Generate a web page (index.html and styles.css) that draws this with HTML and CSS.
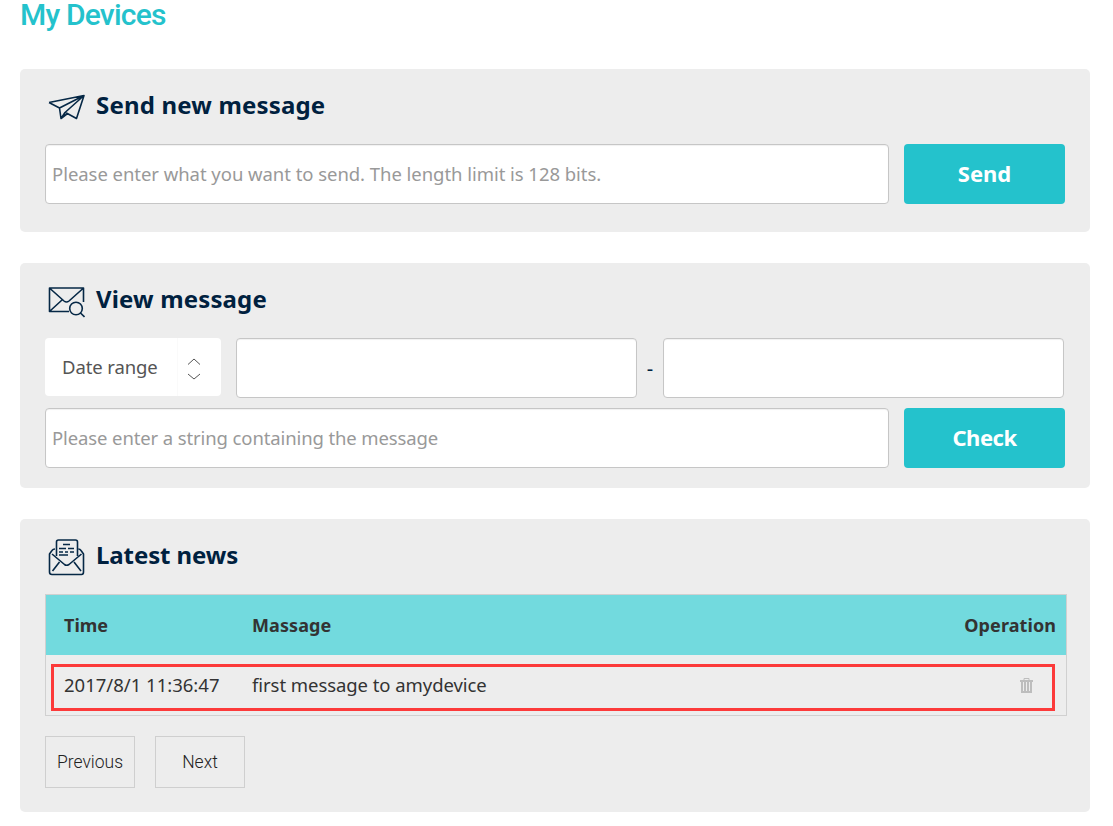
FILE: index.html
```html
<!DOCTYPE html>
<html lang="en">
<head>
<meta charset="utf-8">
<title>My Devices</title>
<link rel="stylesheet" href="styles.css">
</head>
<body>
<main class="page">
  <h1 class="page-title">My Devices</h1>

  <section class="panel panel-send">
    <h2 class="panel-title">
      <svg class="icon" width="38" height="38" viewBox="0 0 38 38"><path d="M2 14.500 37 7.500 29.500 30.500 18.500 24.500M2 14.500 12.500 20l24.500-12.500L18 24.500l-4 6L12.500 20M14 30.500l6.500-5"/></svg>
      <span class="t-send">Send new message</span>
    </h2>
    <div class="row">
      <input class="field field-long ph-send" type="text" placeholder="Please enter what you want to send. The length limit is 128 bits.">
      <button class="btn">Send</button>
    </div>
  </section>

  <section class="panel panel-view">
    <h2 class="panel-title">
      <svg class="icon" width="38" height="38" viewBox="0 0 38 38"><path d="M22 29.500H2.500V6h34V20M3 6.500l14 12.500q2.500 2 5 0L36 6.500M3 29l12-11"/><circle cx="29" cy="26.500" r="6.300"/><path d="M33.500 31 37.500 35"/></svg>
      <span class="t-view">View message</span>
    </h2>
    <div class="row filters">
      <div class="select"><span class="select-label">Date range</span><span class="select-arrow"><svg width="14" height="24" viewBox="0 0 14 24"><path d="M1 8.500 7 3l6 5.500M1 18l6 5 6-5"/></svg></span></div>
      <input class="field field-date" type="text">
      <span class="dash">-</span>
      <input class="field field-date" type="text">
    </div>
    <div class="row">
      <input class="field field-long ph-view" type="text" placeholder="Please enter a string containing the message">
      <button class="btn btn-check">Check</button>
    </div>
  </section>

  <section class="panel panel-news">
    <h2 class="panel-title">
      <svg class="icon" width="38" height="38" viewBox="0 0 38 38"><path d="M9.500 18V4q0-2 2-2h17q2 0 2 2v14M8 11q-2 0-3 1.500L2.500 16v18q0 2.500 2.500 2.500h29.500q2 0 2-2.500V16l-2.500-3.500Q33 11 31.500 11M5 16l12.500 10.500q2 1.500 4.500 0L34.500 16M5.500 33l7-9M34 33l-7-9"/><path d="M16 6.500h7M12 10.500h7m2 0h6M12 14h4m2 0h3m2 0h4M12 17h9"/></svg>
      <span class="t-news">Latest news</span>
    </h2>
    <div class="table">
      <div class="table-row table-head"><span class="col-time">Time</span><span class="col-msg">Massage</span><span class="col-op">Operation</span></div>
      <div class="table-row table-item"><span class="col-time">2017/8/1 11:36:47</span><span class="col-msg">first message to amydevice</span><span class="col-op"><svg class="trash" width="13" height="16" viewBox="0 0 13 16"><path d="M4 2V.5h5V2" fill="none" stroke="#bdbdbd"/><path fill="#bdbdbd" fill-rule="evenodd" d="M0 2h13v2h-1v11H1V4H0zM3 4v9h1V4zM6 4v9h1V4zM9 4v9h1V4z"/></svg></span></div>
      <div class="highlight"></div>
    </div>
    <div class="pager"><button class="page-btn">Previous</button><button class="page-btn">Next</button></div>
  </section>
</main>
</body>
</html>
```
FILE: styles.css
```css
* { box-sizing: border-box; }
body {
  margin: 0;
  background: #fff;
  font-family: "Noto Sans", "Open Sans", sans-serif;
  color: #333;
}
.page { width: 1090px; height: 826px; padding-left: 20px; }
.page-title {
  margin: 0;
  height: 69px;
  font: 500 30px/29px Roboto, sans-serif;
  letter-spacing: -0.800px;
  color: #24c2cc;
}
.panel { background: #ededed; border-radius: 5px; padding: 0 23px 0 25px; margin-bottom: 31px; }
.panel-send { height: 163px; }
.panel-view { height: 225px; }
.panel-news { height: 293px; margin-bottom: 0; }
.panel-title {
  display: flex;
  align-items: center;
  gap: 11px;
  margin: 0;
  padding-left: 2px;
  height: 75px;
  font-size: 24px;
  line-height: 32px;
  font-weight: 700;
  color: #00213f;
}
.panel-title span { margin-top: -4px; white-space: nowrap; }
.t-send { letter-spacing: 0.180px; }
.t-view { letter-spacing: 0.150px; }
.t-news { letter-spacing: -0.100px; }
.icon { fill: none; stroke: #062846; stroke-width: 1.600; stroke-linejoin: round; flex: none; }
.row { display: flex; }
.filters { height: 70px; }
.field {
  height: 60px;
  border: 1px solid #c6c6c6;
  border-radius: 4px;
  background: #fff;
  box-shadow: inset 0 1px 1px rgba(0, 0, 0, .06);
  padding: 0 6px 1px;
  font: 18.500px "Noto Sans", "Open Sans", sans-serif;
}
.field::placeholder { color: #999; opacity: 1; }
.ph-send { letter-spacing: -0.045px; }
.ph-view { letter-spacing: -0.115px; }
.field-long { width: 844px; margin-right: 15px; }
.field-date { width: 401px; }
.btn {
  width: 161px;
  height: 60px;
  border: 0;
  border-radius: 4px;
  background: #24c2cc;
  color: #fff;
  padding: 0 0 2px;
  font: 700 22px "Noto Sans", "Open Sans", sans-serif;
}
.btn-check { letter-spacing: -0.500px; }
.select {
  display: flex;
  width: 176px;
  height: 58px;
  margin-right: 15px;
  border-radius: 4px;
  background: #fff;
  font-size: 18.500px;
  letter-spacing: -0.100px;
  line-height: 58px;
  color: #555;
}
.select-label { width: 133px; padding-left: 17px; border-right: 1px solid #fafafa; white-space: nowrap; }
.select-arrow { padding: 18px 0 0 9px; line-height: 0; }
.select-arrow svg { fill: none; stroke: #555; stroke-width: 1; }
.dash { width: 26px; text-align: center; font-size: 20px; line-height: 62px; color: #00213f; }
.table { position: relative; width: 1022px; height: 122px; border: 1px solid #d0d0d0; }
.table-row { display: flex; height: 60px; line-height: 60px; font-size: 18.500px; letter-spacing: -0.060px; padding: 0 10px 0 18px; white-space: nowrap; }
.table-head { background: #72dade; font-weight: 700; font-size: 18px; letter-spacing: 0.080px; }
.col-time { width: 188px; letter-spacing: 0; }
.col-msg { flex: 1; }
.trash { display: block; margin: 23px 23px 0 0; }
.highlight { position: absolute; left: 5px; top: 69px; width: 1004px; height: 47px; border: 3px solid #fc3a3a; }
.pager { display: flex; gap: 20px; margin-top: 20px; }
.page-btn {
  width: 90px;
  height: 52px;
  padding: 0;
  border: 1px solid #cfcfcf;
  background: transparent;
  font: 300 17.500px Roboto, sans-serif;
  color: #222;
}
```
